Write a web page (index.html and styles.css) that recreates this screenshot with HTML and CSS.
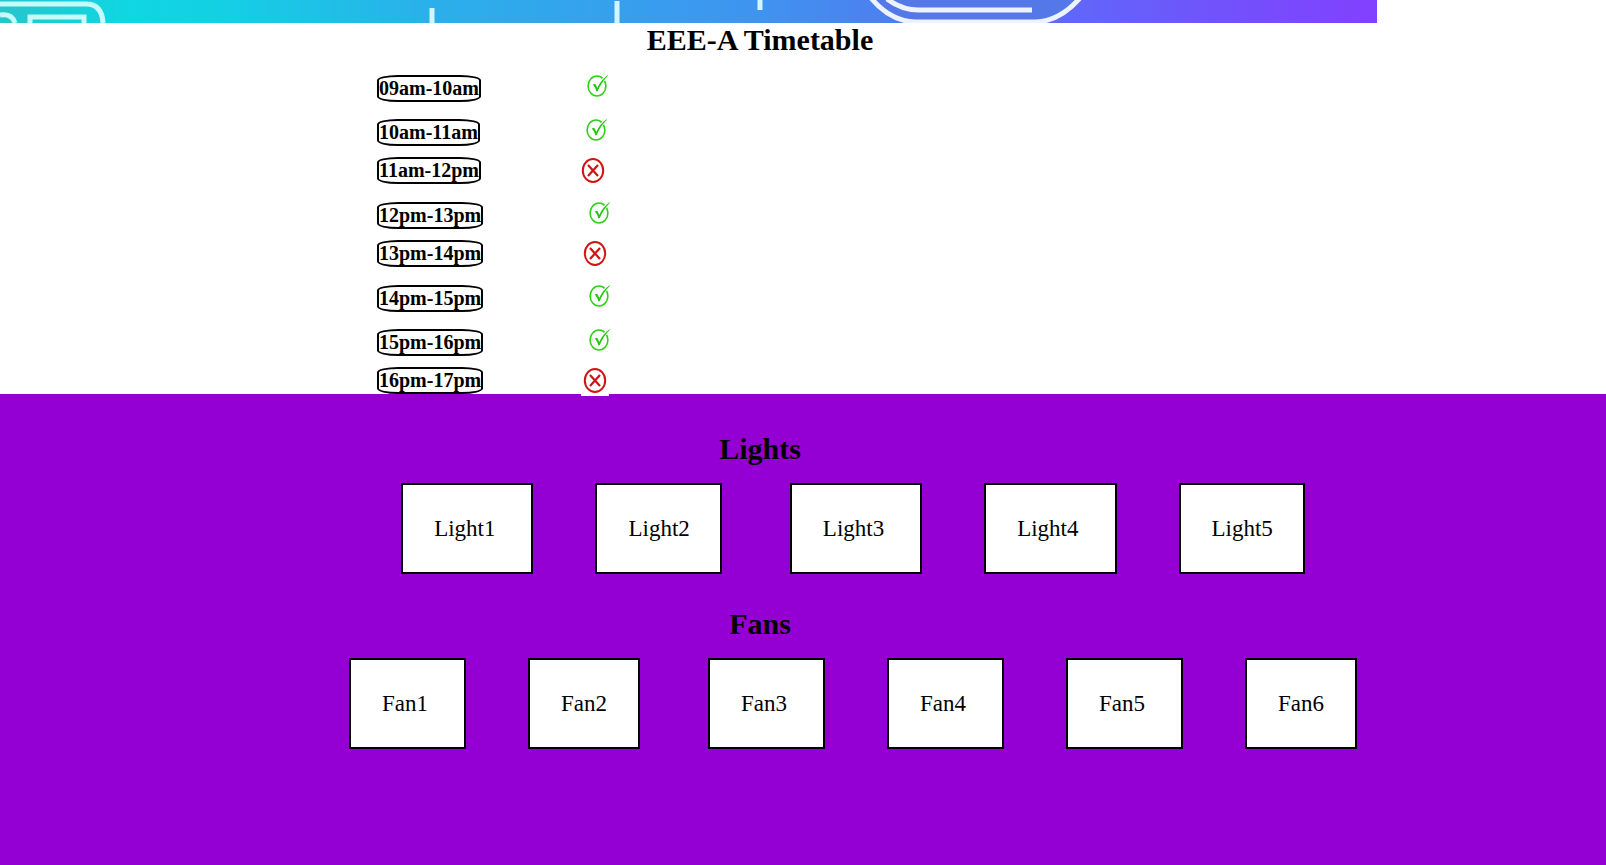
FILE: index.html
```html
<!DOCTYPE html>
<html lang="en">
<head>
<meta charset="utf-8">
<title>EEE-A Timetable</title>
<link rel="stylesheet" href="styles.css">
</head>
<body>
<svg class="defs" aria-hidden="true">
  <symbol id="check" viewBox="0 0 32 27">
    <ellipse cx="18" cy="11" rx="8.900" ry="10" fill="none" stroke="#2fd016" stroke-width="1.600"/>
    <path d="M23 6.500 L28 0" fill="none" stroke="#fff" stroke-width="3"/>
    <path d="M13.800 9.500 L16.200 8.700 Q17.500 10.500 18.200 13 Q21.500 5.500 28.500 0.300 L29 0.800 Q22.500 7 18.800 16 L17.400 16.500 Q16.200 12 13.800 9.500 Z" fill="#23c80c"/>
  </symbol>
  <symbol id="cross" viewBox="0 0 28 30">
    <rect width="28" height="30" fill="#fff"/>
    <ellipse cx="14" cy="14.500" rx="10.200" ry="11.500" fill="none" stroke="#d01414" stroke-width="2"/>
    <path d="M9 9 L19 20 M19 9 L9 20" fill="none" stroke="#d01414" stroke-width="2.200"/>
  </symbol>
</svg>

<svg class="banner" viewBox="0 0 1377 23" preserveAspectRatio="none" aria-hidden="true">
  <defs>
    <linearGradient id="sky" x1="0" x2="1" y1="0" y2="0">
      <stop offset="0" stop-color="#27c5cb"/>
      <stop offset="0.09" stop-color="#10d6e2"/>
      <stop offset="0.16" stop-color="#14d0e4"/>
      <stop offset="0.31" stop-color="#2ab0ea"/>
      <stop offset="0.55" stop-color="#3f94f0"/>
      <stop offset="0.64" stop-color="#4c80f0"/>
      <stop offset="0.77" stop-color="#5f68fa"/>
      <stop offset="0.9" stop-color="#7350fb"/>
      <stop offset="1" stop-color="#8240ff"/>
    </linearGradient>
  </defs>
  <rect width="1377" height="23" fill="url(#sky)"/>
  <g fill="none" stroke="#c4fbfb" stroke-width="5">
    <path d="M0 4 H86 Q102 4 103 23"/>
    <path d="M0 15 Q12 13 15 23 M30 23 V17 H84 V23"/>
    <path d="M432 8 V23 M617 1 V23 M760 0 V10" stroke="#d2f6ff"/>
  </g>
  <path d="M871 -2 Q890 21 915 22 H1036 Q1060 21 1080 -2" fill="#5578e8" stroke="#ecf3ff" stroke-width="5"/>
  <path d="M887 -1 Q902 10 918 10 H1032" fill="none" stroke="#ecf3ff" stroke-width="5"/>
</svg>

<main>
  <section class="timetable">
    <h2>EEE-A Timetable</h2>
    <ul class="slots">
      <li class="free"><span>09am-10am</span><svg role="img" aria-label="Yes"><use href="#check"/></svg></li>
      <li class="free"><span>10am-11am</span><svg role="img" aria-label="Yes"><use href="#check"/></svg></li>
      <li class="busy"><span>11am-12pm</span><svg role="img" aria-label="No"><use href="#cross"/></svg></li>
      <li class="free"><span>12pm-13pm</span><svg role="img" aria-label="Yes"><use href="#check"/></svg></li>
      <li class="busy"><span>13pm-14pm</span><svg role="img" aria-label="No"><use href="#cross"/></svg></li>
      <li class="free"><span>14pm-15pm</span><svg role="img" aria-label="Yes"><use href="#check"/></svg></li>
      <li class="free"><span>15pm-16pm</span><svg role="img" aria-label="Yes"><use href="#check"/></svg></li>
      <li class="busy"><span>16pm-17pm</span><svg role="img" aria-label="No"><use href="#cross"/></svg></li>
    </ul>
  </section>

  <section class="devices">
    <h2>Lights</h2>
    <div class="switches">
      <button class="wide" type="button">Light1</button>
      <button type="button">Light2</button>
      <button class="wide" type="button">Light3</button>
      <button class="wide" type="button">Light4</button>
      <button type="button">Light5</button>
    </div>
    <h2>Fans</h2>
    <div class="switches fans">
      <button class="wide" type="button">Fan1</button>
      <button type="button">Fan2</button>
      <button class="wide" type="button">Fan3</button>
      <button class="wide" type="button">Fan4</button>
      <button class="wide" type="button">Fan5</button>
      <button type="button">Fan6</button>
    </div>
  </section>
</main>
</body>
</html>
```

FILE: styles.css
```css
* {
  box-sizing: border-box;
}

body {
  display: flex;
  flex-direction: column;
  min-height: 100vh;
  margin: 0;
  background: #fff;
  color: #000;
  font-family: "Liberation Serif", "Times New Roman", serif;
}

.defs {
  position: absolute;
  width: 0;
  height: 0;
}

.banner {
  display: block;
  flex: none;
  width: 1377px;
  max-width: 100%;
  height: 23px;
}

main {
  display: flex;
  flex: 1;
  flex-direction: column;
}

h2 {
  margin: 0;
  padding-right: 86px;
  font-size: 30px;
  line-height: 34px;
  text-align: center;
}

.slots {
  margin: 0;
  padding: 10px 0 0 377px;
  list-style: none;
}

.slots li {
  display: flex;
  align-items: flex-start;
}

.slots .free {
  padding: 8px 0 9px;
}

.slots .busy {
  padding: 2px 0 10px;
}

.slots .busy:last-child {
  padding-bottom: 0;
}

.slots span {
  border: 2px solid #000;
  border-radius: 20%;
  font-size: 20px;
  font-weight: bold;
  line-height: 23px;
}

.slots svg {
  position: relative;
  flex: none;
  width: 32px;
  height: 27px;
  margin-left: 98px;
  overflow: visible;
}

.slots .busy svg {
  width: 28px;
  height: 30px;
  margin-top: -1px;
  margin-bottom: -2px;
}

.devices {
  flex: 1;
  padding: 38px 0 32px;
  background: #9400d3;
}

.switches {
  display: flex;
  gap: 62px;
  justify-content: center;
  padding: 17px 0 33px 100px;
}

.switches button {
  margin: 0 6px 0 0;
  padding: 30px 30px 30px 31px;
  border: 2px solid #000;
  border-radius: 0;
  background: #fff;
  color: #000;
  font-family: inherit;
  font-size: 23px;
  line-height: 27px;
}

.fans button {
  padding-right: 31px;
}

.switches .wide {
  margin-right: 0;
  padding-right: 36px;
}

.switches button:last-child {
  margin-right: 0;
}
```
